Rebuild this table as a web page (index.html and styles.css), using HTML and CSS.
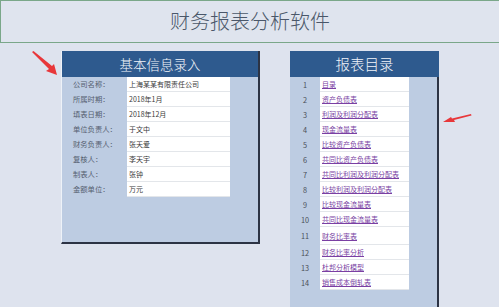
FILE: index.html
```html
<!DOCTYPE html>
<html lang="zh-CN">
<head>
<meta charset="utf-8">
<title>财务报表分析软件</title>
<link rel="stylesheet" href="styles.css">
</head>
<body>
<header class="topbar"><h1 class="title">财务报表分析软件</h1></header>
<main class="sheet">
  <section class="panel info">
    <h2 class="panel-head">基本信息录入</h2>
    <div class="info-grid">
      <span class="lbl">公司名称：</span><span class="val">上海某某有限责任公司</span>
      <span class="lbl">所属时期：</span><span class="val">2018年1月</span>
      <span class="lbl">填表日期：</span><span class="val">2018年12月</span>
      <span class="lbl">单位负责人：</span><span class="val">于文中</span>
      <span class="lbl">财务负责人：</span><span class="val">张天爱</span>
      <span class="lbl">复核人：</span><span class="val">李天宇</span>
      <span class="lbl">制表人：</span><span class="val">张钟</span>
      <span class="lbl">金额单位：</span><span class="val">万元</span>
    </div>
  </section>
  <section class="panel toc">
    <h2 class="panel-head">报表目录</h2>
    <div class="toc-body">
      <ol class="toc-list">
        <li class="toc-row"><span class="num">1</span><a class="link" href="#">目录</a></li>
        <li class="toc-row"><span class="num">2</span><a class="link" href="#">资产负债表</a></li>
        <li class="toc-row"><span class="num">3</span><a class="link" href="#">利润及利润分配表</a></li>
        <li class="toc-row"><span class="num">4</span><a class="link" href="#">现金流量表</a></li>
        <li class="toc-row"><span class="num">5</span><a class="link" href="#">比较资产负债表</a></li>
        <li class="toc-row"><span class="num">6</span><a class="link" href="#">共同比资产负债表</a></li>
        <li class="toc-row"><span class="num">7</span><a class="link" href="#">共同比利润及利润分配表</a></li>
        <li class="toc-row"><span class="num">8</span><a class="link" href="#">比较利润及利润分配表</a></li>
        <li class="toc-row"><span class="num">9</span><a class="link" href="#">比较现金流量表</a></li>
        <li class="toc-row"><span class="num">10</span><a class="link" href="#">共同比现金流量表</a></li>
        <li class="toc-row tall"><span class="num">11</span><a class="link" href="#">财务比率表</a></li>
        <li class="toc-row"><span class="num">12</span><a class="link" href="#">财务比率分析</a></li>
        <li class="toc-row"><span class="num">13</span><a class="link" href="#">杜邦分析模型</a></li>
        <li class="toc-row"><span class="num">14</span><a class="link" href="#">销售成本倒轧表</a></li>
      </ol>
    </div>
  </section>
</main>
<svg class="arrow arrow-left" width="30" height="26" viewBox="0 0 30 26"><polygon points="1,1 2.5,0 21,15 23,13 26,24 15,20 18,18" fill="#e8373a"/></svg>
<svg class="arrow arrow-right" width="34" height="14" viewBox="0 0 34 14"><polygon points="31,1 31.5,2.5 14,7 15,9 3,9 11,4 12,5.5" fill="#e8373a"/></svg>
</body>
</html>
```
FILE: styles.css
```css
* { box-sizing: border-box; }
html, body { margin: 0; padding: 0; }
body {
  width: 499px;
  height: 307px;
  overflow: hidden;
  background: #dee3ee;
  font-family: "Noto Sans CJK SC", "Liberation Sans", sans-serif;
  position: relative;
}
.topbar {
  height: 43px;
  border-top: 1px solid #7aa789;
  border-left: 1px solid #7aa789;
  border-bottom: 1px solid #7aa789;
  display: flex;
  align-items: center;
  justify-content: center;
  background: #dfe4ee;
}
.title {
  margin: 0;
  font-size: 20px;
  font-weight: 300;
  color: #4a5769;
  line-height: 1;
  padding-bottom: 1px;
}
.sheet {
  display: flex;
  align-items: flex-start;
  gap: 30px;
  padding: 8px 0 0 61px;
}
.panel { margin: 0; }
.panel-head {
  margin: 0;
  height: 26px;
  background: #2e5a8e;
  color: #f2f5fa;
  font-weight: 300;
  text-align: center;
  line-height: 26px;
}
.info {
  width: 199px;
  height: 193px;
  background: #bdcce2;
  border-right: 2px solid #2c3344;
  border-bottom: 2px solid #2c3344;
  border-left: 1px solid #eef2f8;
}
.info .panel-head { font-size: 13.5px; }
.info-grid {
  display: grid;
  grid-template-columns: 65px 103px;
  grid-auto-rows: 15px;
}
.lbl {
  font-size: 7.3px;
  color: #556070;
  padding-left: 11px;
  line-height: 15px;
}
.val {
  background: #ffffff;
  font-size: 7px;
  color: #3a3a3a;
  padding-left: 2px;
  line-height: 14px;
  border-bottom: 1px solid #e3e6ea;
}
.toc { width: 149px; }
.toc .panel-head { font-size: 14.5px; }
.toc-body {
  height: 240px;
  background: #bdcce2;
  border-right: 2px solid #2c3344;
}
.toc-list {
  list-style: none;
  margin: 0;
  padding: 0;
  width: 119px;
}
.toc-row {
  display: grid;
  grid-template-columns: 30px 89px;
  height: 15px;
}
.toc-row.tall { height: 18px; }
.num {
  font-size: 7.3px;
  color: #4a4f58;
  text-align: center;
  align-self: center;
}
.link {
  background: #ffffff;
  font-size: 7px;
  color: #7a3fa3;
  text-decoration: underline;
  padding-left: 2px;
  display: flex;
  align-items: center;
  border-bottom: 1px solid #e3e6ea;
}
.arrow { position: absolute; }
.arrow-left { left: 31px; top: 51px; }
.arrow-right { left: 440px; top: 113px; }
```
